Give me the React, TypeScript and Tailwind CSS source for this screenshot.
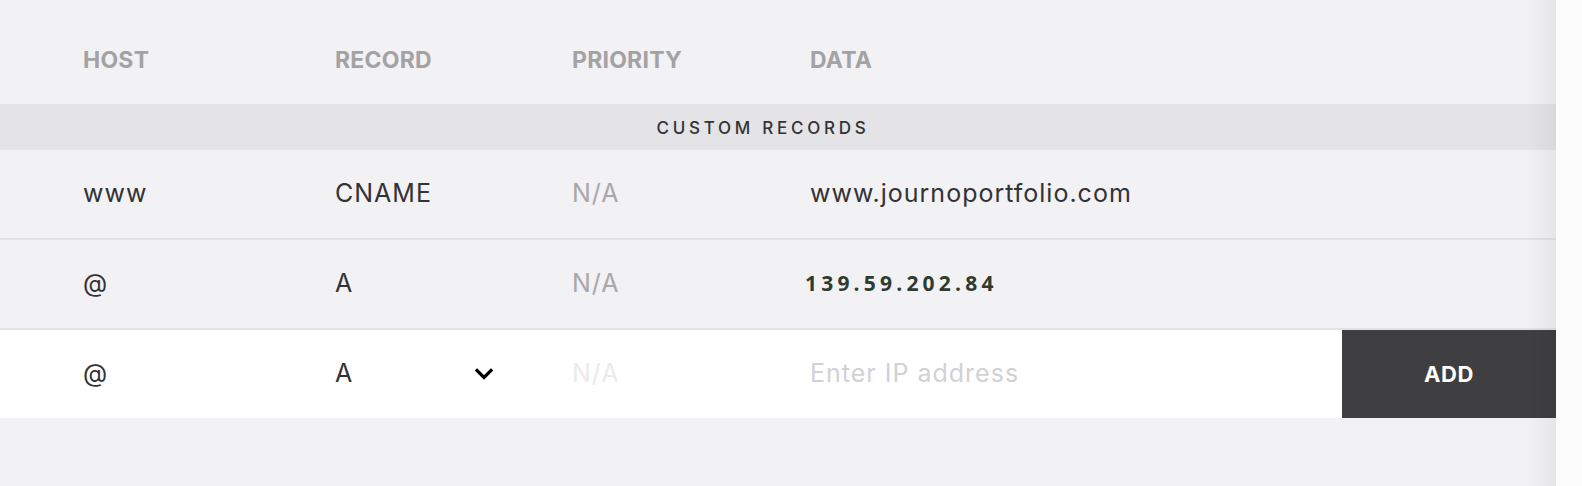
import React from "react";

const sans = "font-['Inter','Open_Sans',sans-serif]";

interface DnsRecord {
  host: string;
  type: string;
  priority: string;
  data: string;
  mono?: boolean;
}

const records: DnsRecord[] = [
  { host: "www", type: "CNAME", priority: "N/A", data: "www.journoportfolio.com" },
  { host: "@", type: "A", priority: "N/A", data: "139.59.202.84", mono: true },
];

function Chevron() {
  return (
    <svg width="18" height="12" viewBox="0 0 18 12" fill="none">
      <path d="M2 2.5l7 7 7-7" stroke="#000" strokeWidth="3.2" strokeLinecap="square" />
    </svg>
  );
}

export default function App() {
  return (
    <div className={`flex w-[1582px] h-[486px] bg-[#fcfcfd] ${sans}`}>
      <div className="relative flex-1 bg-[#f2f1f3] flex flex-col">
        {/* column headings */}
        <div className="grid grid-cols-[252px_237px_238px_1fr] pl-[83px] h-[104px] pt-[45px] text-[23px] leading-[30px] font-bold tracking-[0.01em] text-[#a3a2a4]">
          <span>HOST</span>
          <span>RECORD</span>
          <span>PRIORITY</span>
          <span>DATA</span>
        </div>

        {/* section band */}
        <div className="h-[46px] bg-[#e4e3e5] flex items-center justify-center pr-[30px] pt-[4px] text-[17px] font-medium tracking-[0.22em] text-[#333235]">
          CUSTOM RECORDS
        </div>

        {records.map((r) => (
          <div
            key={r.data}
            className="grid grid-cols-[252px_237px_238px_1fr] items-center pl-[83px] h-[90px] border-b-2 border-[#e2e1e3] text-[25px] tracking-[0.04em] text-[#333235]"
          >
            <span>{r.host}</span>
            <span>{r.type}</span>
            <span className="text-[#a8a7aa]">{r.priority}</span>
            {r.mono ? (
              <span className="-ml-[5px] font-['Open_Sans',sans-serif] font-bold text-[21px] tracking-[0.2em] text-[#2d3b31]">
                {r.data}
              </span>
            ) : (
              <span>{r.data}</span>
            )}
          </div>
        ))}

        {/* new record row */}
        <div className="flex h-[88px]">
          <div className="flex-1 bg-white grid grid-cols-[252px_237px_238px_1fr] items-center pl-[83px] text-[25px] tracking-[0.04em] text-[#333235]">
            <span>@</span>
            <div className="flex items-center justify-between w-[158px]">
              <span>A</span>
              <Chevron />
            </div>
            <span className="text-[#ebeaec]">N/A</span>
            <span className="text-[#d2d1d4]">Enter IP address</span>
          </div>
          <button className="w-[214px] bg-[#3f3e40] text-white text-[22px] font-bold tracking-[0.03em]">ADD</button>
        </div>

        {/* edge shade */}
        <div className="pointer-events-none absolute inset-y-0 right-0 w-[30px] bg-gradient-to-r from-transparent to-[rgba(0,0,0,0.05)]" />
      </div>
      <div className="w-[26px]" />
    </div>
  );
}
